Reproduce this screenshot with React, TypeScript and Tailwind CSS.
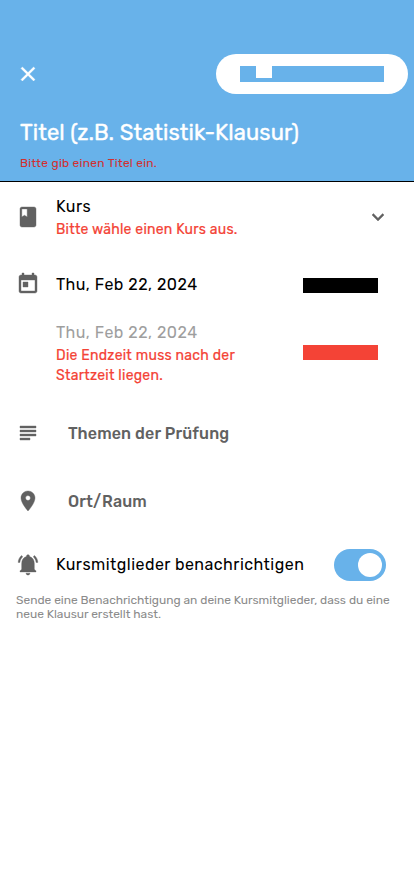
import type { ReactNode } from 'react';

const paths = {
  close: 'M19 6.41 17.59 5 12 10.59 6.41 5 5 6.41 10.59 12 5 17.59 6.41 19 12 13.41 17.59 19 19 17.59 13.41 12z',
  book: 'M18 2H6c-1.1 0-2 .9-2 2v16c0 1.1.9 2 2 2h12c1.1 0 2-.9 2-2V4c0-1.1-.9-2-2-2zM5.800 3.900h5.400v8l-2.700-1.600L5.800 11.900V3.900z',
  chevron: 'M7.41 8.59 12 13.17l4.590-4.580L18 10l-6 6-6-6z',
  event: 'M19 3h-1V1h-2v2H8V1H6v2H5c-1.110 0-1.990.9-1.990 2L3 19c0 1.100.89 2 2 2h14c1.100 0 2-.9 2-2V5c0-1.100-.9-2-2-2zm0 16H5V8h14v11zM7 10h5v5H7z',
  subject: 'M14 17H4v2h10v-2zm6-8H4v2h16V9zM4 15h16v-2H4v2zM4 5v2h16V5H4z',
  place: 'M12 2C8.130 2 5 5.130 5 9c0 5.250 7 13 7 13s7-7.750 7-13c0-3.870-3.130-7-7-7zm0 9.500a2.500 2.500 0 0 1 0-5 2.500 2.500 0 0 1 0 5z',
  bell: 'M6.700 3.900 5.700 2.500C3.700 3.900 2.300 6.500 2.200 9.400h1.700C4.100 7.100 5 5.200 6.700 3.900zM20.100 9.400h1.700C21.700 6.500 20.300 3.900 18.300 2.500l-1 1.400c1.700 1.300 2.600 3.200 2.800 5.500zM18.300 10.500c0-3.400-1.700-6.100-4.700-6.900V3.300c0-.9-.7-1.500-1.600-1.500s-1.600.6-1.600 1.500v.3C7.400 4.400 5.700 7.100 5.700 10.500v5.700l-1.700 1.700v1h16v-1l-1.700-1.700v-5.700zM12 22c1.100 0 2-.9 2-1.800h-4c0 .9.9 1.800 2 1.800z',
};

function Icon({ name, className = 'size-6 text-[#616161]' }: { name: keyof typeof paths; className?: string }) {
  return (
    <svg viewBox="0 0 24 24" fill="currentColor" stroke="currentColor" strokeWidth="0.4" strokeLinejoin="round" className={`shrink-0 ${className}`} aria-hidden="true">
      <path d={paths[name]} />
    </svg>
  );
}

function Row({ icon, className, children }: { icon: keyof typeof paths; className: string; children: ReactNode }) {
  return (
    <div className={`flex items-center pl-4 ${className}`}>
      <Icon name={icon} />
      {children}
    </div>
  );
}

export default function App() {
  return (
    <div className="min-h-[896px] w-full bg-white font-['Rubik','Roboto',sans-serif] whitespace-nowrap text-black">
      <header className="h-[182px] border-b border-black bg-[#68b2ea] pt-[54px]">
        <div className="flex h-10 items-center justify-between pr-1.5 pl-4">
          <button aria-label="Close">
            <Icon name="close" className="size-6 text-white" />
          </button>
          <button aria-label="Save" className="flex h-10 w-48 items-center justify-center rounded-full bg-white">
            <span className="flex h-4 w-36 bg-[#68b2ea] pl-4">
              <span className="h-3 w-4 bg-white" />
            </span>
          </button>
        </div>
        <div className="px-5 pt-[25px]">
          <h1 className="text-[22px] leading-7 font-normal tracking-[0.1px] text-white [-webkit-text-stroke:0.4px_white]">Titel (z.B. Statistik-Klausur)</h1>
          <p className="mt-2 text-xs leading-4 tracking-[0.25px] text-[#d32f2f]">Bitte gib einen Titel ein.</p>
        </div>
      </header>

      <main>
        <Row icon="book" className="h-[70px] pr-6">
          <div className="ml-4 flex-1 pt-0.5">
            <p className="text-base leading-6 tracking-[0.5px]">Kurs</p>
            <p className="text-sm leading-[22px] tracking-[0.23px] text-[#f44336] [-webkit-text-stroke:0.2px_#f44336]">Bitte wähle einen Kurs aus.</p>
          </div>
          <Icon name="chevron" className="size-6 text-[#616161]" />
        </Row>
        <Row icon="event" className="h-16 pr-9">
          <p className="ml-4 flex-1 pt-0.5 text-base leading-6 tracking-[0.5px]">Thu, Feb 22, 2024</p>
          <span className="mt-0.5 h-[15px] w-[75px] bg-black" />
        </Row>
        <div className="flex h-[73px] items-center justify-between pr-9 pl-14">
          <div className="pt-px">
            <p className="text-base leading-6 tracking-[0.5px] text-[#9e9e9e]">Thu, Feb 22, 2024</p>
            <p className="mt-px text-sm leading-5 tracking-[0.25px] text-[#f44336] [-webkit-text-stroke:0.2px_#f44336]">
              Die Endzeit muss nach der<br />Startzeit liegen.
            </p>
          </div>
          <span className="h-[15px] w-[75px] bg-[#f44336]" />
        </div>
        <Row icon="subject" className="mt-3 h-16">
          <p className="ml-7 pt-0.5 text-base leading-6 font-medium tracking-[0.15px] text-[#616161]">Themen der Prüfung</p>
        </Row>
        <Row icon="place" className="mt-1 h-16">
          <p className="ml-7 pt-0.5 text-base leading-6 font-medium tracking-[0.15px] text-[#616161]">Ort/Raum</p>
        </Row>
        <Row icon="bell" className="h-16 pr-7">
          <p className="ml-4 flex-1 text-base leading-6 tracking-[0.47px]">Kursmitglieder benachrichtigen</p>
          <button role="switch" aria-checked="true" aria-label="Kursmitglieder benachrichtigen" className="flex h-8 w-[52px] items-center justify-end rounded-full bg-[#68b2ea] pr-1">
            <span className="size-6 rounded-full bg-white" />
          </button>
        </Row>
        <p className="-mt-1 pl-4 text-xs leading-[14px] tracking-[-0.02px] text-[#8b8b8b]">
          Sende eine Benachrichtigung an deine Kursmitglieder, dass du eine<br />neue Klausur erstellt hast.
        </p>
      </main>
    </div>
  );
}
